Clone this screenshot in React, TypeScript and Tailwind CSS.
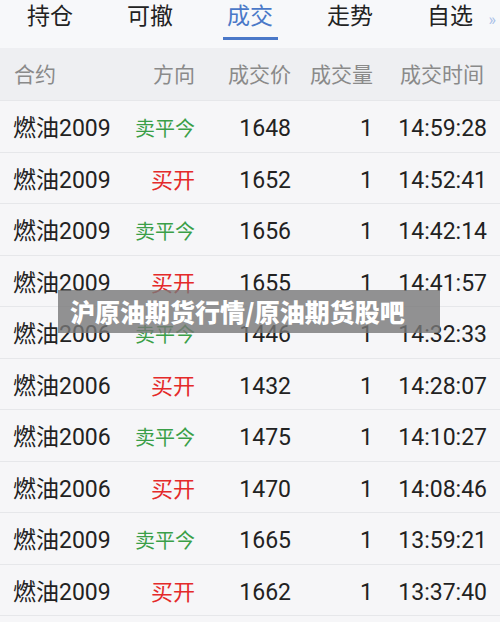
import React from "react";

type Row = { c: string; d: "sell" | "buy"; p: string; v: string; t: string };

const rows: Row[] = [
  { c: "燃油2009", d: "sell", p: "1648", v: "1", t: "14:59:28" },
  { c: "燃油2009", d: "buy", p: "1652", v: "1", t: "14:52:41" },
  { c: "燃油2009", d: "sell", p: "1656", v: "1", t: "14:42:14" },
  { c: "燃油2009", d: "buy", p: "1655", v: "1", t: "14:41:57" },
  { c: "燃油2006", d: "sell", p: "1446", v: "1", t: "14:32:33" },
  { c: "燃油2006", d: "buy", p: "1432", v: "1", t: "14:28:07" },
  { c: "燃油2006", d: "sell", p: "1475", v: "1", t: "14:10:27" },
  { c: "燃油2006", d: "buy", p: "1470", v: "1", t: "14:08:46" },
  { c: "燃油2009", d: "sell", p: "1665", v: "1", t: "13:59:21" },
  { c: "燃油2009", d: "buy", p: "1662", v: "1", t: "13:37:40" },
];

const tabs = ["持仓", "可撤", "成交", "走势", "自选"];

export default function App() {
  return (
    <div
      className="relative w-[500px] h-[622px] overflow-hidden bg-[#f6f6f8]"
      style={{ fontFamily: "Roboto, 'Noto Sans CJK SC', sans-serif" }}
    >
      {/* Tabs */}
      <div className="relative flex h-[48px] bg-[#f7f8fa]">
        {tabs.map((t, i) => (
          <div key={t} className="relative flex-1 flex justify-center">
            <span
              className={
                "mt-[2px] text-[23px] leading-[30px] " +
                (i === 2 ? "text-[#4a78c8]" : "text-[#222222]")
              }
            >
              {t}
            </span>
            {i === 2 && (
              <div className="absolute left-[23px] top-[37px] w-[55px] h-[3px] bg-[#4a78c8]" />
            )}
          </div>
        ))}
        <span className="absolute right-[4px] top-[8px] text-[16px] text-[#a9c0e8]">»</span>
      </div>

      {/* Header */}
      <div className="grid grid-cols-[120px_75px_96px_82px_114px] items-center h-[53px] pt-[4px] bg-[#eeeff2] text-[21px] text-[#8a8a8a] border-b border-[#e6e7ea]">
        <div className="pl-[14px]">合约</div>
        <div className="text-right">方向</div>
        <div className="text-right">成交价</div>
        <div className="text-right">成交量</div>
        <div className="text-right pr-[3px]">成交时间</div>
      </div>

      {/* Rows */}
      {rows.map((r, i) => (
        <div
          key={i}
          className="grid grid-cols-[120px_75px_96px_82px_114px] items-center h-[51.5px] pt-[6px] border-b border-[#e6e7ea] text-[23px] text-[#222222]"
        >
          <div className="pl-[13px]">{r.c}</div>
          <div className="text-right">
            {r.d === "sell" ? (
              <span className="text-[20px] text-[#3a9f48]">卖平今</span>
            ) : (
              <span className="text-[22px] text-[#e42a2a]">买开</span>
            )}
          </div>
          <div className="text-right">{r.p}</div>
          <div className="text-right">{r.v}</div>
          <div className="text-right">{r.t}</div>
        </div>
      ))}

      {/* Overlay banner */}
      <div className="absolute left-[58px] top-[290px] w-[382px] h-[43px] bg-[rgba(120,120,120,0.8)] flex items-center pl-[12px]">
        <span
          className="text-white font-black text-[25px] leading-none"
          style={{ fontFamily: "'Noto Sans CJK SC', sans-serif" }}
        >
          沪原油期货行情/原油期货股吧
        </span>
      </div>
    </div>
  );
}
